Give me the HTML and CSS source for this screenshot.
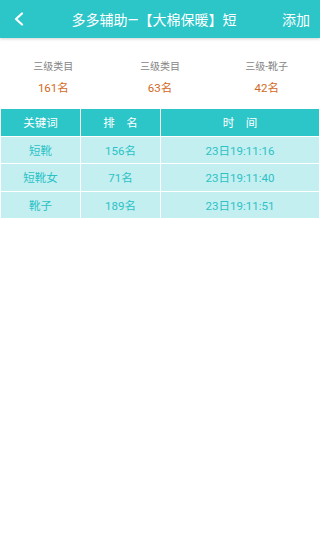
FILE: index.html
```html
<!DOCTYPE html>
<html lang="zh-CN">
<head>
<meta charset="utf-8">
<title>多多辅助</title>
<link rel="stylesheet" href="styles.css">
</head>
<body>
<header class="topbar">
  <div class="back">
    <svg width="10" height="14" viewBox="0 0 10 14"><polyline points="8,1.5 2,7 8,12.5" fill="none" stroke="#fff" stroke-width="2.2" stroke-linecap="round" stroke-linejoin="round"/></svg>
  </div>
  <div class="title">多多辅助—【大棉保暖】短</div>
  <div class="action">添加</div>
</header>
<section class="stats">
  <div class="stat"><div class="stat-label">三级类目</div><div class="stat-value">161名</div></div>
  <div class="stat"><div class="stat-label">三级类目</div><div class="stat-value">63名</div></div>
  <div class="stat"><div class="stat-label">三级-靴子</div><div class="stat-value">42名</div></div>
</section>
<table class="ranks">
  <colgroup><col class="c1"><col class="c2"><col class="c3"></colgroup>
  <thead>
    <tr><th>关键词</th><th>排&emsp;名</th><th>时&emsp;间</th></tr>
  </thead>
  <tbody>
    <tr><td>短靴</td><td>156名</td><td>23日19:11:16</td></tr>
    <tr><td>短靴女</td><td>71名</td><td>23日19:11:40</td></tr>
    <tr><td>靴子</td><td>189名</td><td>23日19:11:51</td></tr>
  </tbody>
</table>
</body>
</html>
```
FILE: styles.css
```css
html, body {
  margin: 0;
  padding: 0;
  background: #fff;
  font-family: "Roboto", "Noto Sans CJK SC", sans-serif;
}
.topbar {
  height: 38px;
  background: #2cc5c8;
  display: flex;
  align-items: center;
  color: #fff;
  box-shadow: 0 1px 3px rgba(0, 0, 0, 0.18);
  position: relative;
}
.back {
  width: 40px;
  height: 38px;
  display: flex;
  align-items: center;
  padding-left: 14px;
  box-sizing: border-box;
}
.back svg { display: block; }
.title {
  flex: 1;
  text-align: center;
  font-size: 14px;
  white-space: nowrap;
  overflow: hidden;
}
.action {
  font-size: 14px;
  padding-right: 10px;
  padding-left: 14px;
}
.stats {
  display: flex;
  padding: 22px 0 0;
}
.stat {
  flex: 1;
  text-align: center;
}
.stat-label {
  font-size: 10px;
  line-height: 14px;
  color: #858585;
}
.stat-value {
  margin-top: 6px;
  font-size: 11.5px;
  line-height: 16px;
  color: #d2691e;
}
.ranks {
  margin-top: 12px;
  width: 100%;
  border-collapse: separate;
  border-spacing: 1px;
  table-layout: fixed;
  font-size: 11.5px;
}
.c1, .c2 { width: 25%; }
.c3 { width: 50%; }
.ranks th {
  background: #2cc5c8;
  color: #fff;
  font-weight: normal;
  height: 26.5px;
  padding: 0;
}
.ranks td {
  background: #c3eff0;
  color: #2bc2c6;
  text-align: center;
  height: 26.5px;
  padding: 0;
}
```
